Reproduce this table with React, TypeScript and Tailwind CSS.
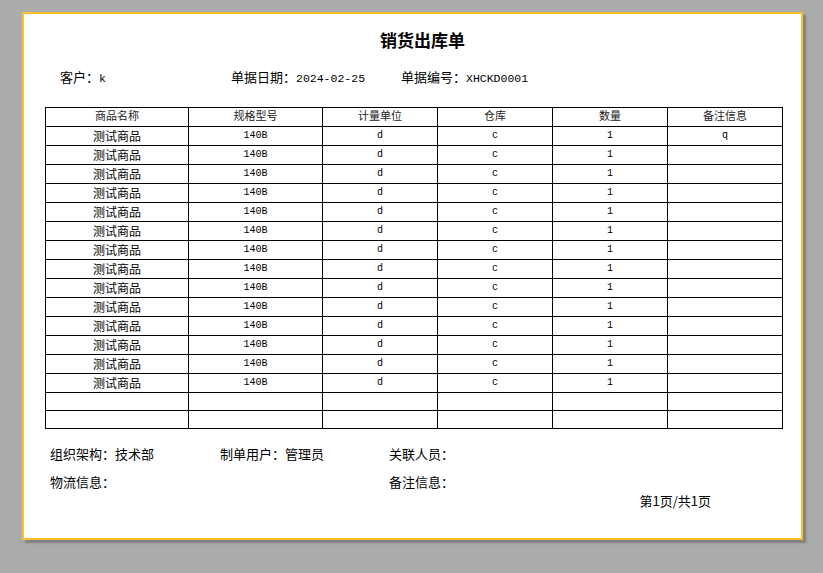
import React from "react";

const cjk = { fontFamily: '"Noto Sans CJK SC", "Noto Sans", sans-serif' };
const mono = { fontFamily: '"Liberation Mono", "Noto Sans CJK SC", monospace' };

const columns = [
  { title: "商品名称", width: 143 },
  { title: "规格型号", width: 134 },
  { title: "计量单位", width: 115 },
  { title: "仓库", width: 115 },
  { title: "数量", width: 115 },
  { title: "备注信息", width: 115 },
];

const rows = Array.from({ length: 14 }, (_, i) => ({
  name: "测试商品",
  spec: "140B",
  unit: "d",
  store: "c",
  qty: "1",
  note: i === 0 ? "q" : "",
}));

export default function App() {
  return (
    <div className="w-[823px] h-[573px] bg-[#ababab] pl-[22px] pt-[12px] overflow-hidden" style={cjk}>
      <div className="w-[781px] h-[528px] bg-white border-2 border-[#fbc02d] shadow-[3px_3px_2px_#7f7f7f] flex flex-col text-black">
        {/* title */}
        <div className="mt-[16px] h-[20px] leading-[20px] text-center text-[17px] font-bold pl-[20px]">销货出库单</div>

        {/* header info */}
        <div className="mt-[19px] h-[16px] leading-[16px] flex text-[13px] pl-[36px]">
          <div className="w-[171px]">
            客户：<span className="text-[11.5px]" style={mono}>k</span>
          </div>
          <div className="w-[170px]">
            单据日期：<span className="text-[11.5px]" style={mono}>2024-02-25</span>
          </div>
          <div>
            单据编号：<span className="text-[11.5px]" style={mono}>XHCKD0001</span>
          </div>
        </div>

        {/* goods table */}
        <div className="mt-[22px] pl-[21px]">
          <table className="table-fixed border-collapse w-[737px]">
            <colgroup>
              {columns.map((c) => (
                <col key={c.title} style={{ width: c.width }} />
              ))}
            </colgroup>
            <thead>
              <tr className="h-[19px]">
                {columns.map((c) => (
                  <th key={c.title} className="border border-black p-0 text-[11px] font-normal text-[#222] leading-[11px] align-top pt-[2px]">
                    {c.title}
                  </th>
                ))}
              </tr>
            </thead>
            <tbody>
              {rows.map((r, i) => (
                <tr key={i} className="h-[19px]">
                  <td className="border border-black p-0 text-center text-[12px] leading-[12px]">{r.name}</td>
                  <td className="border border-black p-0 text-center text-[10px] leading-[10px]" style={mono}>{r.spec}</td>
                  <td className="border border-black p-0 text-center text-[10px] leading-[10px]" style={mono}>{r.unit}</td>
                  <td className="border border-black p-0 text-center text-[10px] leading-[10px]" style={mono}>{r.store}</td>
                  <td className="border border-black p-0 text-center text-[10px] leading-[10px]" style={mono}>{r.qty}</td>
                  <td className="border border-black p-0 text-center text-[10px] leading-[10px]" style={mono}>{r.note}</td>
                </tr>
              ))}
              {[0, 1].map((i) => (
                <tr key={"e" + i} className="h-[18px]">
                  {columns.map((c) => (
                    <td key={c.title} className="border border-black p-0"></td>
                  ))}
                </tr>
              ))}
            </tbody>
          </table>
        </div>

        {/* footer info */}
        <div className="mt-[17px] h-[16px] leading-[16px] flex text-[13px] pl-[26px]">
          <div className="w-[170px]">组织架构：技术部</div>
          <div className="w-[169px]">制单用户：管理员</div>
          <div>关联人员：</div>
        </div>
        <div className="mt-[12px] h-[16px] leading-[16px] flex text-[13px] pl-[26px]">
          <div className="w-[339px]">物流信息：</div>
          <div>备注信息：</div>
        </div>
        <div className="mt-[3px] h-[16px] leading-[16px] text-[13px] flex justify-end pr-[90px]">第1页/共1页</div>
      </div>
    </div>
  );
}
